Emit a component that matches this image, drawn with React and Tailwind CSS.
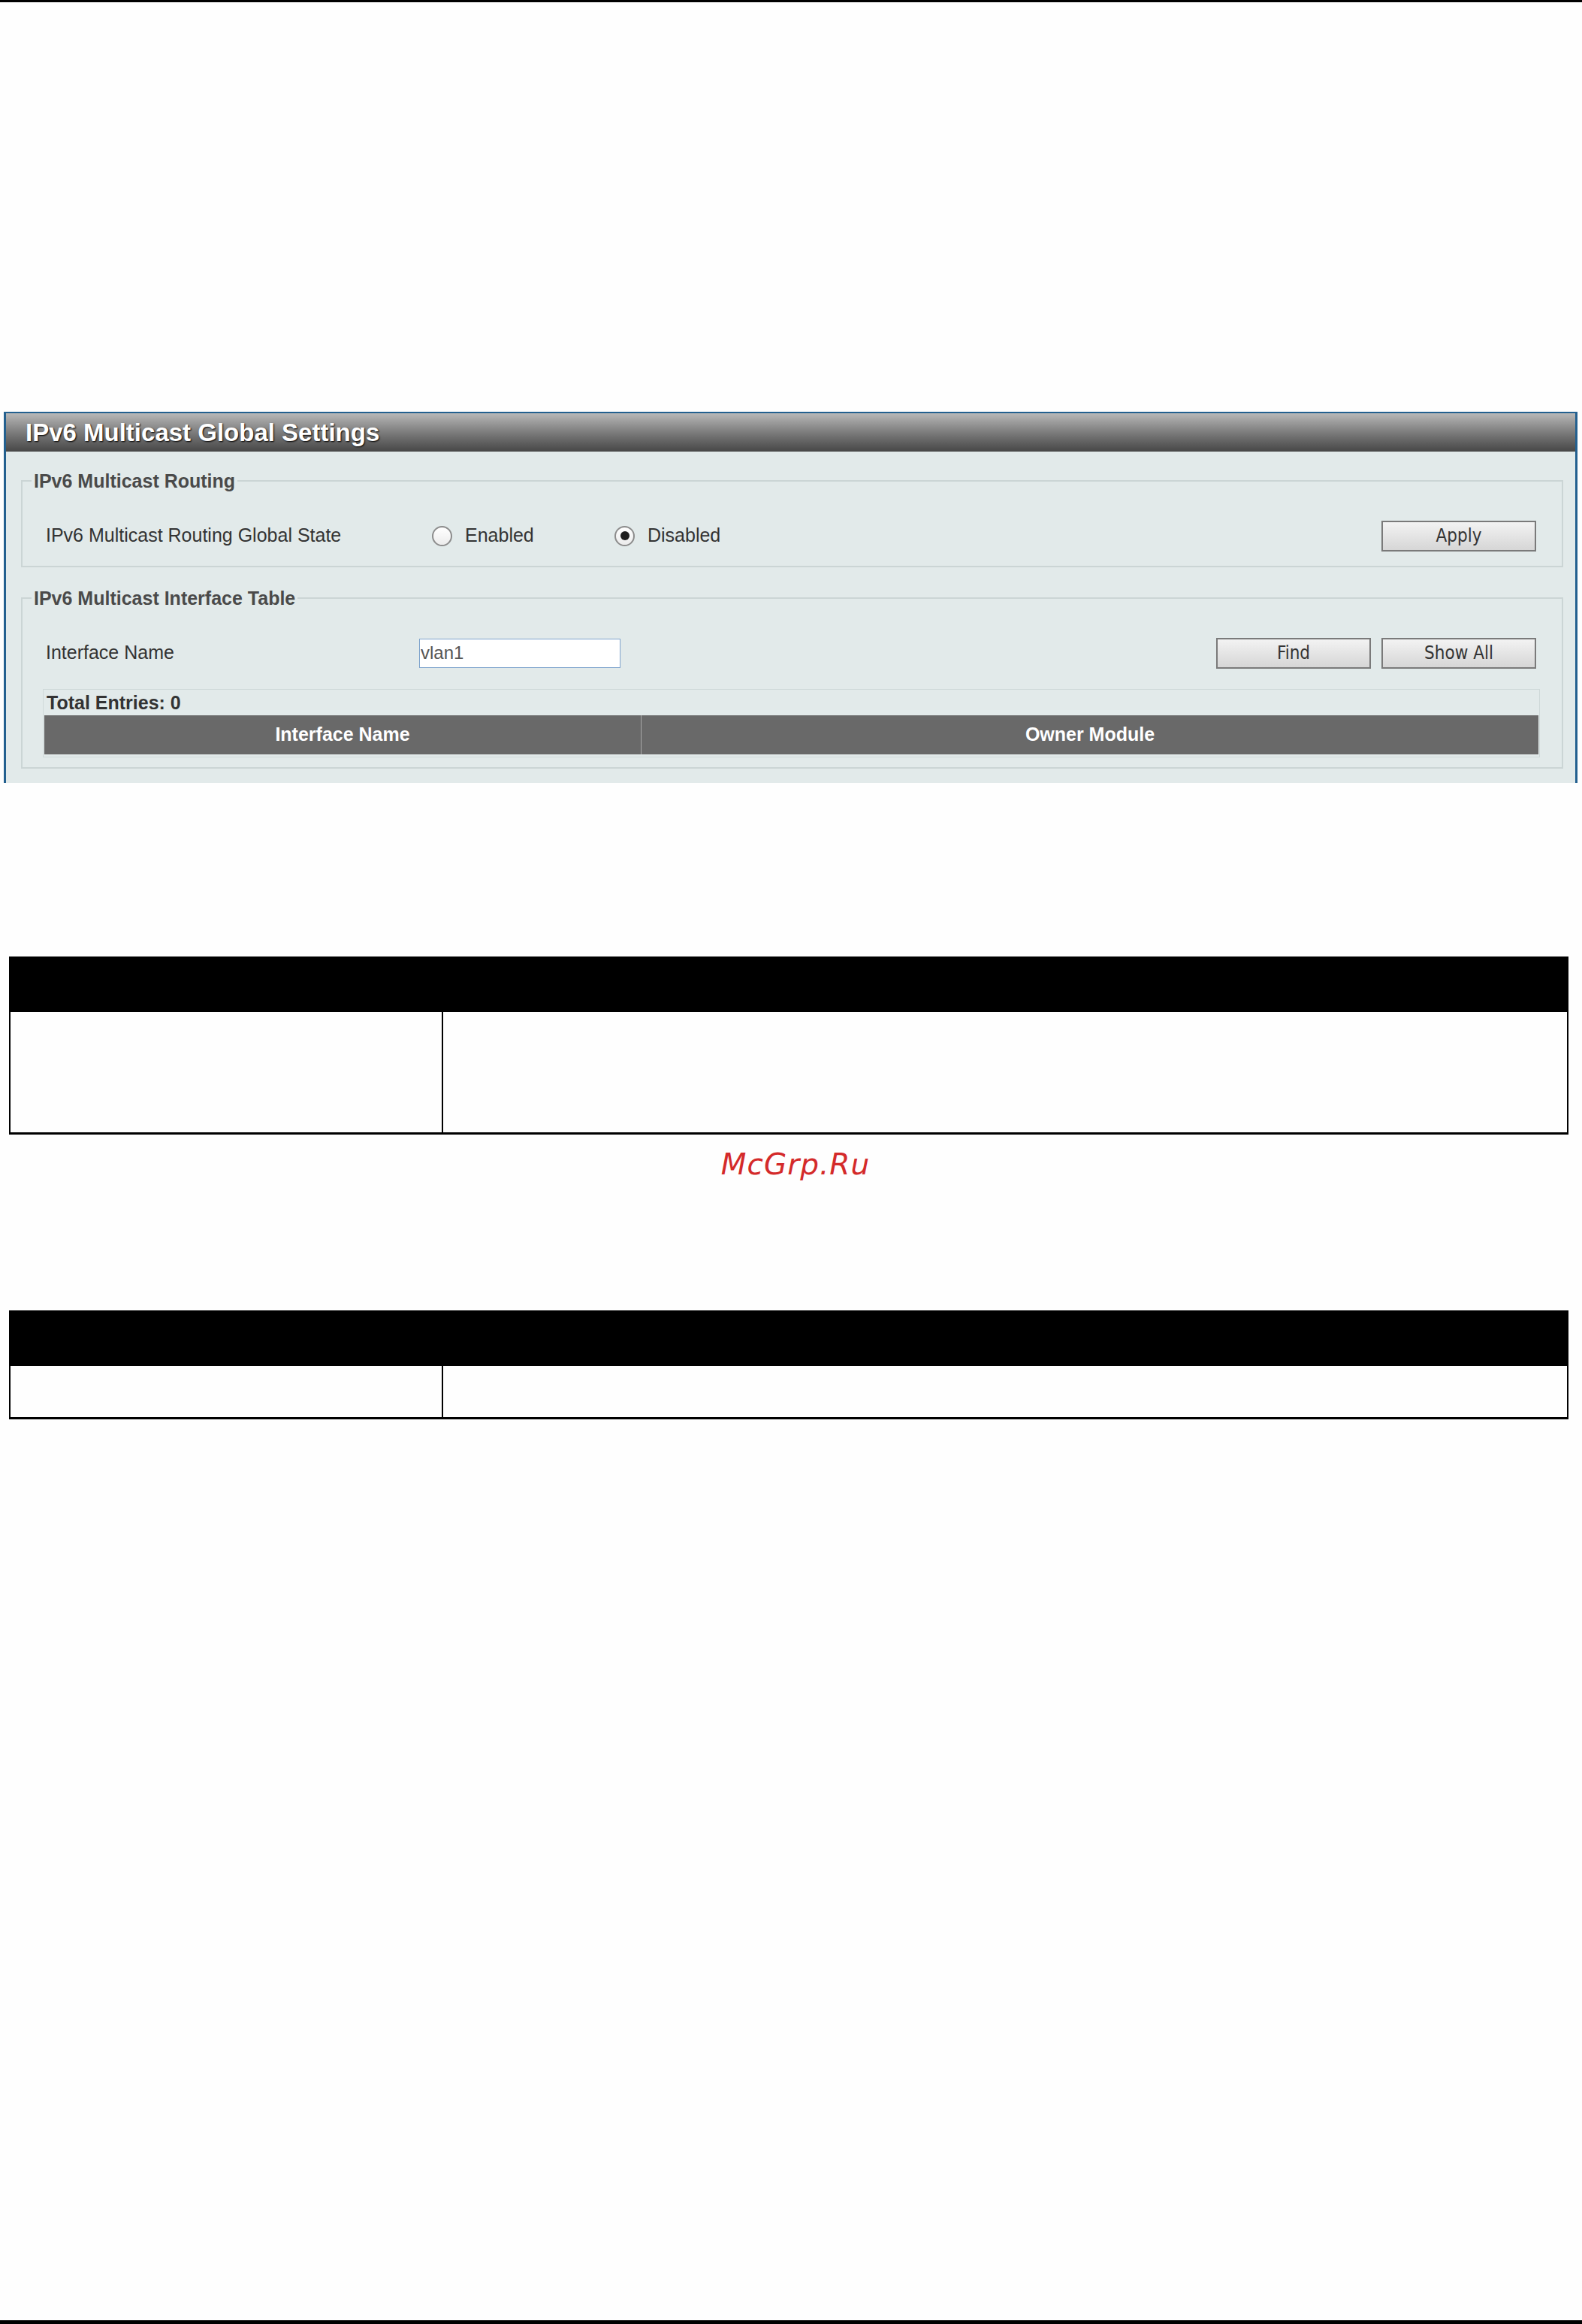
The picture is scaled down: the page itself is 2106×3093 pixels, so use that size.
import React from "react";

const FONT = { fontFamily: '"Liberation Sans", Arial, sans-serif' };
const BTN_FONT = { fontFamily: '"DejaVu Sans Condensed", "DejaVu Sans", Tahoma, sans-serif' };

function Radio({ checked }) {
  return (
    <span className="flex h-[27px] w-[27px] items-center justify-center rounded-full border-2 border-[#8c8c8c] bg-linear-to-b from-[#ffffff] to-[#ececec]">
      {checked && <span className="h-[12px] w-[12px] rounded-full bg-[#1e1e1e]" />}
    </span>
  );
}

function Button({ children }) {
  return (
    <button
      className="h-[41px] w-[206px] border-2 border-[#7a7a7a] bg-linear-to-b from-[#f3f3f3] to-[#d6d6d6] text-[24px] text-[#333]"
      style={BTN_FONT}
    >
      {children}
    </button>
  );
}

function Fieldset({ title, children, className = "" }) {
  return (
    <fieldset className={`border-2 border-[#cbd5d5] px-[12px] ${className}`}>
      <legend className="px-[3px] text-[25px] font-bold leading-[28px] text-[#4a4a4a]">{title}</legend>
      {children}
    </fieldset>
  );
}

function DocTable({ bodyHeight }) {
  return (
    <div className="ml-[12px] mr-[18px]">
      <div className="h-[74px] bg-black" />
      <div className={`flex border-x-2 border-b-[3px] border-black ${bodyHeight}`}>
        <div className="w-[576px] border-r-2 border-black" />
        <div className="flex-1" />
      </div>
    </div>
  );
}

export default function App() {
  return (
    <div className="flex h-[3093px] flex-col bg-[#fefefe]" style={FONT}>
      <div className="h-[3px] bg-black" />

      {/* Settings panel */}
      <div className="ml-[5px] mr-[6px] mt-[545px] border-x-[3px] border-t-2 border-[#23608f]">
        <div className="flex h-[51px] items-center bg-linear-to-b from-[#b8b8b8] via-[#7c7c7c] to-[#474747] pl-[26px]">
          <span className="text-[33px] font-bold text-white [text-shadow:1px_1px_2px_#000]">
            IPv6 Multicast Global Settings
          </span>
        </div>

        <div className="bg-[#e2eaea] pb-[19px] pl-[20px] pr-[16px] pt-[25px]">
          <Fieldset title="IPv6 Multicast Routing" className="pb-[20px]">
            <div className="mt-[39px] flex h-[40px] items-center pl-[19px] pr-[22px] text-[25px] text-[#333]">
              <span className="w-[514px]">IPv6 Multicast Routing Global State</span>
              <label className="flex w-[243px] items-center gap-[17px]">
                <Radio />
                <span>Enabled</span>
              </label>
              <label className="flex items-center gap-[17px]">
                <Radio checked />
                <span>Disabled</span>
              </label>
              <div className="ml-auto">
                <Button>Apply</Button>
              </div>
            </div>
          </Fieldset>

          <Fieldset title="IPv6 Multicast Interface Table" className="mt-[27px] pb-[13px]">
            <div className="mt-[39px] flex h-[40px] items-center pl-[19px] pr-[22px] text-[25px] text-[#333]">
              <span className="w-[497px]">Interface Name</span>
              <input
                defaultValue="vlan1"
                className="h-[39px] w-[268px] border border-[#7ea3cc] bg-white px-[1px] text-[24px] text-[#555] outline-none"
                style={FONT}
              />
              <div className="ml-auto flex gap-[14px]">
                <Button>Find</Button>
                <Button>Show All</Button>
              </div>
            </div>

            <div className="ml-[15px] mr-[17px] mt-[28px] border border-[#cfd9d9] p-[1px] pb-[3px]">
              <div className="flex h-[33px] items-center pl-[3px] text-[25px] font-bold text-[#333]">
                Total Entries: 0
              </div>
              <div className="flex h-[52px] bg-[#696969] text-[25px] font-bold text-white">
                <div className="flex w-[795px] items-center justify-center border-r border-[#a8a8a8]">
                  Interface Name
                </div>
                <div className="flex flex-1 items-center justify-center">Owner Module</div>
              </div>
            </div>
          </Fieldset>
        </div>
      </div>

      {/* Parameter tables */}
      <div className="mt-[231px]">
        <DocTable bodyHeight="h-[163px]" />
      </div>

      <div className="mt-[17px] flex justify-center pl-[12px]">
        <span
          className="text-[39px] italic leading-[46px] tracking-[1px] text-[#d42a2a]"
          style={{ fontFamily: '"DejaVu Sans", sans-serif' }}
        >
          McGrp.Ru
        </span>
      </div>

      <div className="mt-[171px]">
        <DocTable bodyHeight="h-[71px]" />
      </div>

      <div className="flex-1" />
      <div className="h-[5px] bg-black" />
    </div>
  );
}
